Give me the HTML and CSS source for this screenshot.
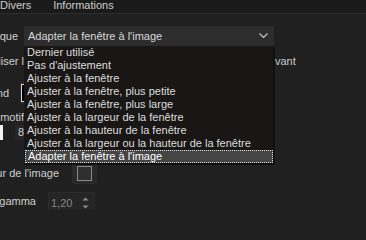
FILE: index.html
```html
<!DOCTYPE html>
<html lang="fr">
<head>
<meta charset="utf-8">
<title>Préférences</title>
<link rel="stylesheet" href="styles.css">
</head>
<body>
<div class="tabbar">
  <span class="tab tab-divers">Divers</span>
  <span class="tab tab-info">Informations</span>
</div>
<div class="content">
  <div class="row row-a">
    <div class="lbl lbl-a"><span>Technique</span></div>
    <div class="combo">
      <span class="combo-text">Adapter la fenêtre à l'image</span>
      <svg class="chev" width="9" height="6" viewBox="0 0 9 6"><path d="M0.5 0.5 L4.5 4.5 L8.5 0.5" fill="none" stroke="#c4c4c4" stroke-width="1.2"/></svg>
    </div>
  </div>
  <div class="row row-b">
    <div class="lbl lbl-b"><span>Utiliser l</span></div>
    <span class="next">Suivant</span>
  </div>
  <div class="row row-c">
    <div class="lbl lbl-c"><span>Couleur de fond</span></div>
    <div class="swatch-btn"><div class="swatch-black"></div></div>
  </div>
  <div class="row row-d">
    <div class="lbl lbl-d"><span>Utiliser un motif</span></div>
  </div>
  <div class="row row-e">
    <div class="swatch-white"></div>
    <div class="spin-small">8</div>
  </div>
  <div class="row row-f">
    <div class="lbl lbl-f"><span>Couleur de l'image</span></div>
    <div class="check-wrap"><div class="check"></div></div>
  </div>
  <div class="row row-g">
    <div class="lbl lbl-g"><span>Correction gamma</span></div>
    <div class="spin">
      <span class="spin-val">1,20</span>
      <svg class="spin-arrows" width="7" height="14" viewBox="0 0 7 14"><path d="M0.5 4.5 L3.5 1.5 L6.5 4.5 Z" fill="#8c8c8c"/><path d="M0.5 9.5 L3.5 12.5 L6.5 9.5 Z" fill="#8c8c8c"/></svg>
    </div>
  </div>

  <ul class="dropdown">
    <li>Dernier utilisé</li>
    <li>Pas d'ajustement</li>
    <li>Ajuster à la fenêtre</li>
    <li>Ajuster à la fenêtre, plus petite</li>
    <li>Ajuster à la fenêtre, plus large</li>
    <li>Ajuster à la largeur de la fenêtre</li>
    <li>Ajuster à la hauteur de la fenêtre</li>
    <li>Ajuster à la largeur ou la hauteur de la fenêtre</li>
    <li class="sel">Adapter la fenêtre à l'image</li>
  </ul>
</div>
</body>
</html>
```
FILE: styles.css
```css
* { box-sizing: border-box; }
html, body {
  margin: 0;
  padding: 0;
  width: 366px;
  height: 210px;
  overflow: hidden;
  background: #202020;
  font-family: "Liberation Sans", Arial, sans-serif;
  font-size: 11px;
  color: #cfcfcf;
}
.tabbar {
  height: 14px;
  background: #1a1a1a;
  border-bottom: 1px solid #2c2c2c;
  display: flex;
  align-items: center;
  overflow: hidden;
}
.tab {
  line-height: 12px;
  margin-top: -4px;
  color: #cdcdcd;
}
.tab-divers { margin-left: 0; }
.tab-info { margin-left: 22px; }
.content {
  position: relative;
  height: 196px;
  display: flex;
  flex-direction: column;
}
.row {
  display: flex;
  align-items: center;
  flex: none;
}
.lbl {
  display: flex;
  justify-content: flex-end;
  overflow: hidden;
  white-space: nowrap;
  flex: none;
  color: #cfcfcf;
}
.lbl span { flex: none; }
.row-a { margin-top: 12px; height: 20px; }
.lbl-a { width: 18px; }
.combo {
  margin-left: 6px;
  width: 250px;
  height: 20px;
  background: #2d2d2d;
  display: flex;
  align-items: center;
  justify-content: space-between;
  padding: 0 6px 0 4px;
  color: #d8d8d8;
}
.row-b { margin-top: 6px; height: 18px; }
.lbl-b { width: 24px; }
.next { margin-left: 235px; color: #c8c8c8; }
.row-c { margin-top: 12px; height: 22px; }
.lbl-c { width: 9px; }
.swatch-btn {
  margin-left: 11px;
  width: 40px;
  height: 22px;
  background: #2a2a2a;
  padding: 2px 1px;
}
.swatch-black {
  width: 100%;
  height: 100%;
  background: #000;
  border: 1px solid #d8d8d8;
}
.row-d { margin-top: 4px; height: 17px; }
.lbl-d { width: 24px; }
.row-e { margin-top: 0px; height: 15px; align-items: stretch; }
.swatch-white { width: 3px; background: #f2f2f2; }
.spin-small {
  margin-left: 12px;
  width: 40px;
  background: #262626;
  padding-left: 3px;
  line-height: 15px;
  color: #cfcfcf;
}
.row-f { margin-top: 22px; height: 22px; }
.lbl-f { width: 59px; }
.check-wrap {
  margin-left: 13px;
  width: 25px;
  height: 22px;
  background: #2a2a2a;
  border-radius: 3px;
  display: flex;
  align-items: center;
  justify-content: center;
}
.check {
  width: 15px;
  height: 15px;
  border: 1px solid #8a8a8a;
  background: #2f2f2f;
}
.row-g { margin-top: 8px; height: 22px; align-items: flex-start; }
.lbl-g { width: 36px; margin-top: 3px; }
.spin {
  margin-left: 12px;
  width: 47px;
  height: 22px;
  background: #252525;
  border: 1px solid #2c2c2c;
  display: flex;
  align-items: center;
  justify-content: space-between;
  padding: 0 5px 0 2px;
}
.spin-val { color: #858585; }
.dropdown {
  position: absolute;
  left: 24px;
  top: 32px;
  width: 249px;
  height: 117px;
  margin: 0;
  padding: 0;
  list-style: none;
  background: #191715;
  box-shadow: 1px 1px 1px #0c0c0c, 2px 2px 0 #151515;
}
.dropdown li {
  height: 13px;
  line-height: 13px;
  padding-left: 3px;
  white-space: nowrap;
  overflow: hidden;
  color: #dcdcdc;
}
.dropdown li.sel {
  background: #454545;
  border: 1px dotted #e0e0e0;
  margin-left: 1px;
  padding-left: 2px;
  line-height: 11px;
  color: #ffffff;
}
```
